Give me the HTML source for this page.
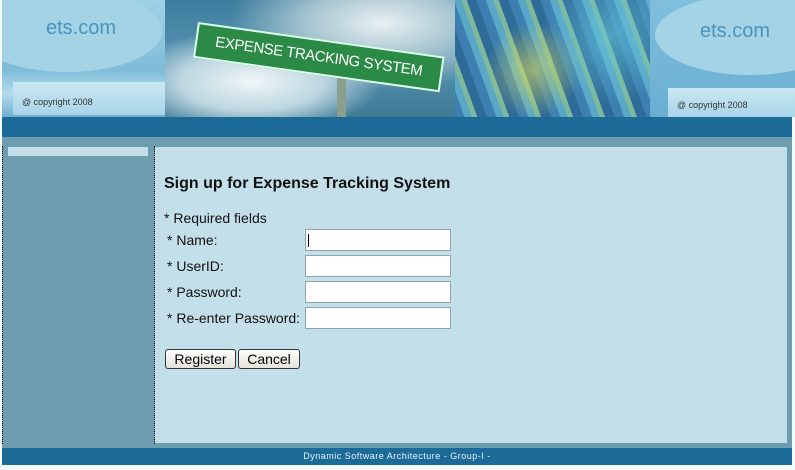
<!DOCTYPE html>
<html><head><style>
body{margin:0;width:795px;height:470px;background:#f4fbfd;position:relative;overflow:hidden;font-family:"Liberation Sans",Arial,sans-serif}
.a{position:absolute}
.in{position:absolute;left:305px;width:144px;height:20px;background:#fff;border:1px solid #8ea3ae}
.lb{position:absolute;left:167px;font-size:14px;color:#111}
.btn{position:absolute;top:349px;height:18px;border:1px solid #333;border-radius:3px;background:linear-gradient(#fff,#e4e1d8);font-size:14px;text-align:center;line-height:18px}
</style></head><body>
<div class="a" style="left:2px;top:0;width:163px;height:117px;background:linear-gradient(#9fd2e6,#7fbcd8 60%,#b4dcec 80%,#6eaed0);overflow:hidden">
 <div class="a" style="left:-30px;top:-10px;width:190px;height:82px;border-radius:50%;background:#a4d3e6"></div>
 <div class="a" style="left:44px;top:17px;font-size:20px;color:#4b93bd">ets.com</div>
 <div class="a" style="left:11px;top:82px;width:152px;height:33px;background:linear-gradient(#cbe8f3,#a8d4e8)"></div>
 <div class="a" style="left:20px;top:97px;font-size:9px;color:#333">@ copyright 2008</div>
</div>
<div class="a" style="left:165px;top:0;width:290px;height:117px;background:radial-gradient(ellipse at 30% 70%,#f0f6f8 0,#bcd6e0 25%,transparent 45%),radial-gradient(ellipse at 75% 20%,#e9f0f2 0,#a5c4d0 25%,transparent 50%),linear-gradient(#3e7d9e,#5592b0 50%,#3f7a95);overflow:hidden">
 <div class="a" style="left:172px;top:70px;width:9px;height:50px;background:#8aa08c"></div>
 <div class="a" style="left:33px;top:22px;width:245px;height:32px;background:#2b8a45;border:2px solid #dfe;transform:rotate(8deg);transform-origin:0 0;color:#fff;font-size:15px;line-height:32px;text-align:center;letter-spacing:-0.4px">EXPENSE TRACKING SYSTEM</div>
</div>
<div class="a" style="left:455px;top:0;width:195px;height:117px;background:radial-gradient(circle at 40% 60%,rgba(220,220,90,.6),transparent 35%),radial-gradient(circle at 80% 30%,rgba(100,200,220,.6),transparent 40%),repeating-linear-gradient(70deg,#3c7fb0 0 9px,#5aa8c8 9px 16px,#7fb89a 16px 21px,#2f6b98 21px 30px)"></div>
<div class="a" style="left:650px;top:0;width:145px;height:117px;background:linear-gradient(#7fbfdc,#69aed2);overflow:hidden">
 <div class="a" style="left:5px;top:-5px;width:190px;height:80px;border-radius:50%;background:#a4d3e6"></div>
 <div class="a" style="left:50px;top:20px;font-size:20px;color:#4b93bd">ets.com</div>
 <div class="a" style="left:18px;top:88px;width:127px;height:29px;background:linear-gradient(#cbe8f3,#a8d4e8)"></div>
 <div class="a" style="left:27px;top:100px;font-size:9px;color:#333">@ copyright 2008</div>
</div>
<div class="a" style="left:2px;top:117px;width:790px;height:20px;background:#1c6a98"></div>
<div class="a" style="left:2px;top:137px;width:790px;height:311px;background:#6f9db0"></div>
<div class="a" style="left:2px;top:146px;width:151px;height:298px;border-left:1px dotted #000;border-right:1px dotted #000;background:#6f9db0"></div>
<div class="a" style="left:8px;top:147px;width:140px;height:9px;background:#c3dfea"></div>
<div class="a" style="left:155px;top:147px;width:632px;height:296px;background:#c3dfea"></div>
<div class="a" style="left:164px;top:175px;font-size:16px;font-weight:bold;color:#111">Sign up for Expense Tracking System</div>
<div class="lb" style="left:164px;top:210px">* Required fields</div>
<div class="lb" style="top:232px">* Name:</div>
<div class="lb" style="top:258px">* UserID:</div>
<div class="lb" style="top:284px">* Password:</div>
<div class="lb" style="top:310px">* Re-enter Password:</div>
<div class="in" style="top:229px"><div class="a" style="left:2px;top:4px;width:1px;height:13px;background:#000"></div></div>
<div class="in" style="top:255px"></div>
<div class="in" style="top:281px"></div>
<div class="in" style="top:307px"></div>
<div class="btn" style="left:165px;width:69px">Register</div>
<div class="btn" style="left:238px;width:60px">Cancel</div>
<div class="a" style="left:2px;top:448px;width:790px;height:17px;background:#1c6a98;color:#e8f2f8;font-size:9px;line-height:17px;text-align:center;letter-spacing:0.5px">Dynamic Software Architecture - Group-I -</div>
</body></html>
